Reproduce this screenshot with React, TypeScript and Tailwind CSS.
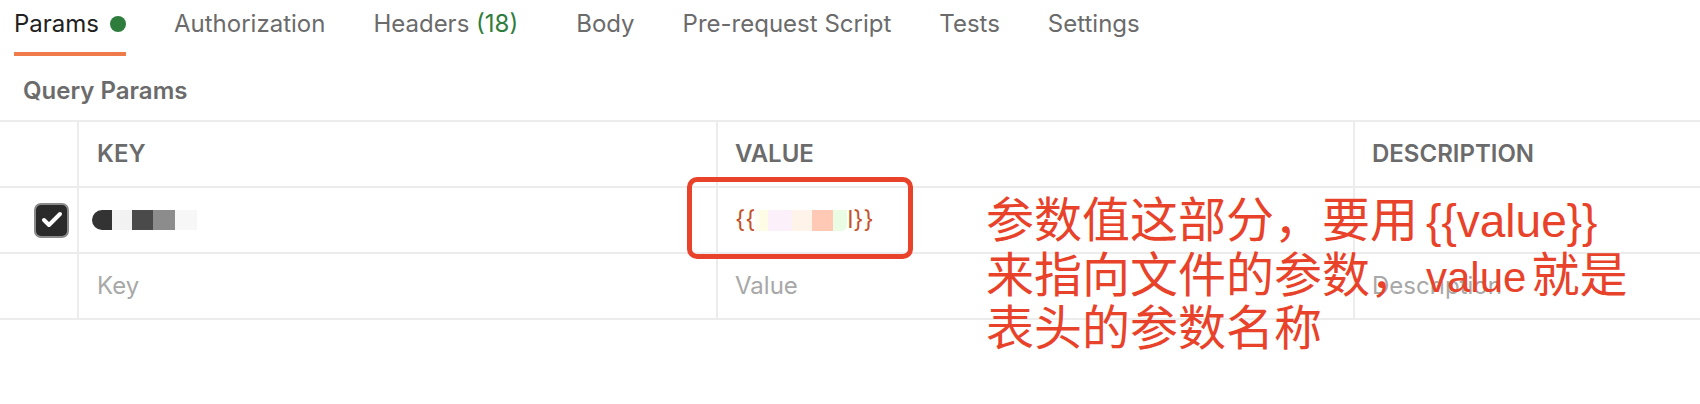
import { Check } from 'lucide-react';

const tabs = ['Authorization', 'Headers', 'Body', 'Pre-request Script', 'Tests', 'Settings'];

function Tabs() {
  return (
    <div className="flex h-[56px] pl-[14px] gap-[48px] text-[24px]">
      <div className="flex items-center gap-[11px] pb-[4px] border-b-4 border-[#ef7a4a] text-[#212121]">
        <span>Params</span>
        <span className="w-[16px] h-[16px] rounded-full bg-[#2f7d3c]" />
      </div>
      {tabs.map((t) => (
        <div key={t} className="flex items-center pb-[8px] text-[#6b6b6b]">
          {t === 'Headers' ? (
            <span className="mr-[10px]">
              Headers <span className="text-[#2f7d3c]">(18)</span>
            </span>
          ) : (
            t
          )}
        </div>
      ))}
    </div>
  );
}

// redacted bits in the screenshot, drawn as blocks
function KeyBlur() {
  return (
    <div className="flex h-[20px] -ml-[5px]">
      <div className="w-[20px] rounded-l-full bg-[#333]" />
      <div className="w-[20px] bg-[#f2f2f2]" />
      <div className="w-[21px] bg-[#4a4a4a]" />
      <div className="w-[22px] bg-[#8c8c8c]" />
      <div className="w-[22px] bg-[#f7f7f7]" />
    </div>
  );
}

function ValueBlur() {
  return (
    <div className="flex items-center text-[#c4532b]">
      <span>{'{{'}</span>
      <div className="flex h-[21px]">
        <div className="w-[5px] bg-[#fdfdf0]" />
        <div className="w-[8px] bg-[#fffce6]" />
        <div className="w-[24px] bg-[#fcf0fb]" />
        <div className="w-[20px] bg-[#fff3ea]" />
        <div className="w-[21px] bg-[#ffc9b6]" />
        <div className="w-[14px] rounded-br-[6px] bg-[#eafde4]" />
      </div>
      <span>{'l}}'}</span>
    </div>
  );
}

function Row({ cells }: { cells: React.ReactNode[] }) {
  return (
    <div className="flex h-[66px] border-b-2 border-[#ececec]">
      <div className="w-[79px] flex items-center justify-end pr-[8px] border-r-2 border-[#ececec]">{cells[0]}</div>
      <div className="w-[639px] flex items-center px-[18px] border-r-2 border-[#ececec]">{cells[1]}</div>
      <div className="w-[637px] flex items-center px-[17px] border-r-2 border-[#ececec]">{cells[2]}</div>
      <div className="flex-1 flex items-center px-[17px]">{cells[3]}</div>
    </div>
  );
}

export default function App() {
  return (
    <div className="relative w-[1700px] h-[404px] bg-white overflow-hidden" style={{ fontFamily: 'Inter, "Noto Sans", sans-serif' }}>
      <Tabs />
      <div className="mt-[23px] mb-[17px] pl-[23px] text-[24px] leading-[24px] font-semibold text-[#6b6b6b]">Query Params</div>
      <div className="border-t-2 border-[#ececec] text-[24px]">
        <Row
          cells={[
            null,
            <span className="font-semibold text-[#6b6b6b]">KEY</span>,
            <span className="font-semibold text-[#6b6b6b]">VALUE</span>,
            <span className="font-semibold text-[#6b6b6b]">DESCRIPTION</span>,
          ]}
        />
        <Row
          cells={[
            <div className="w-[35px] h-[35px] rounded-[7px] border-2 border-[#8a8a8a] bg-[#2a2a2a] flex items-center justify-center">
              <Check size={24} strokeWidth={4} color="#fff" />
            </div>,
            <KeyBlur />,
            <ValueBlur />,
            null,
          ]}
        />
        <Row
          cells={[
            null,
            <span className="text-[#a8a8a8]">Key</span>,
            <span className="text-[#a8a8a8]">Value</span>,
            <span className="text-[#a8a8a8]">Description</span>,
          ]}
        />
      </div>

      {/* annotation overlay */}
      <div className="absolute left-[687px] top-[177px] w-[226px] h-[82px] rounded-[10px] border-[5px] border-[#e8432a]" />
      <div
        className="absolute left-[986px] top-[193px] text-[48px] text-[#e8432a] whitespace-nowrap"
        style={{ fontFamily: '"Liberation Sans", "Noto Sans CJK SC", sans-serif' }}
      >
        <div className="h-[55px] leading-[56px]">
          参数值这部分，要用<span className="ml-[8px] text-[46px]">{'{{value}}'}</span>
        </div>
        <div className="h-[53px] leading-[56px]">
          来指向文件的参数，<span className="ml-[8px] mr-[5px] text-[42px]">value</span>就是
        </div>
        <div className="h-[56px] leading-[56px]">表头的参数名称</div>
      </div>
    </div>
  );
}
